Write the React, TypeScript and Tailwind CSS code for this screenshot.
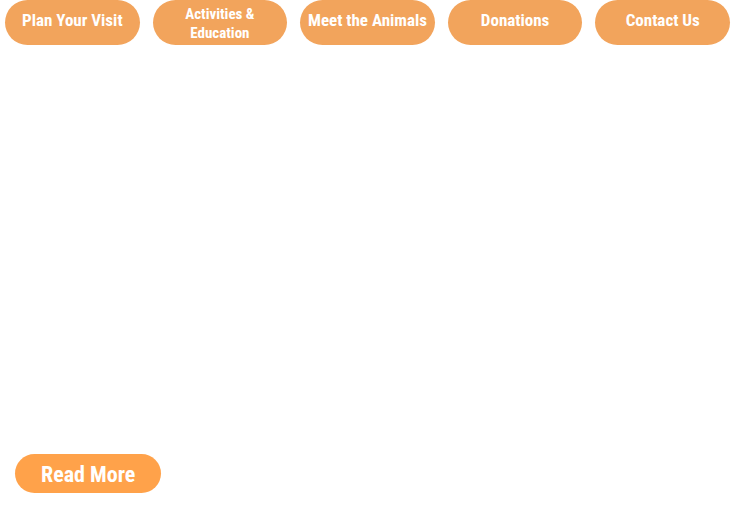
const font = "font-['Roboto_Condensed','Open_Sans_Condensed','Liberation_Sans_Narrow','Liberation_Sans',sans-serif]";

const links = [
  { label: 'Plan Your Visit', size: 'pb-[6px] text-[17px] leading-5' },
  { label: 'Activities & Education', size: 'px-6 pt-[2px] text-[15px] leading-[19px]' },
  { label: 'Meet the Animals', size: 'pb-[6px] text-[17px] leading-5' },
  { label: 'Donations', size: 'pb-[6px] text-[17px] leading-5' },
  { label: 'Contact Us', size: 'pb-[6px] text-[17px] leading-5' },
];

export default function App() {
  return (
    <div className={`bg-white font-bold text-white ${font}`}>
      <nav aria-label="Main" className="grid grid-cols-5 gap-[13px] pr-[7px] pl-[5px]">
        {links.map(({ label, size }) => (
          <a
            key={label}
            href="#"
            className={`flex h-[45px] items-center justify-center rounded-full bg-[#f2a45c] text-center ${size}`}
          >
            {label}
          </a>
        ))}
      </nav>
      <main className="px-[15px] pt-[409px] pb-7">
        <button type="button" className="h-[39px] rounded-full bg-[#ffa24a] px-[26px] pt-[2px] text-[22px] leading-7">
          Read More
        </button>
      </main>
    </div>
  );
}
